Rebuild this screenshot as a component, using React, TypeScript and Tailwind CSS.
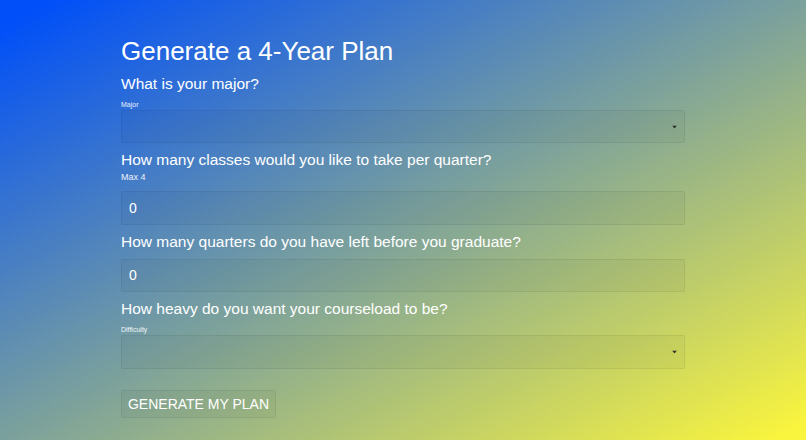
import React from 'react';

const font = { fontFamily: '"Liberation Sans", Arial, sans-serif' };

const Caret = () => (
  <svg width="5" height="3" viewBox="0 0 5 3" className="absolute right-[7px] top-1/2 -translate-y-1/2">
    <path d="M0 0h5L2.5 3z" fill="#2a2f2a" />
  </svg>
);

const SelectBox = ({ label, className }: { label: string; className?: string }) => (
  <>
    <div className="mt-[6px] text-[7px] leading-[9px] text-white/90">{label}</div>
    <div
      className={`relative mt-px rounded-[2px] border border-black/[0.06] bg-black/[0.03] ${className ?? ''}`}
    >
      <Caret />
    </div>
  </>
);

const NumberBox = ({ className }: { className?: string }) => (
  <div
    className={`flex items-center rounded-[2px] border border-black/[0.06] bg-black/[0.03] pl-[7px] text-[14px] text-white ${className ?? ''}`}
  >
    0
  </div>
);

const Question = ({ children }: { children: React.ReactNode }) => (
  <h3 className="mt-[7px] text-[15.5px] leading-5 font-normal text-white">{children}</h3>
);

export default function App() {
  return (
    <div
      className="min-h-[440px] w-full bg-linear-to-br/srgb from-[#004ff9] from-[3%] to-[#f9f43e] to-[98%]"
      style={font}
    >
      <div className="mx-auto flex w-[564px] flex-col pt-[35px]">
        <h1 className="text-[26px] leading-8 font-light text-white">Generate a 4-Year Plan</h1>

        <Question>What is your major?</Question>
        <SelectBox label="Major" className="h-[33px]" />

        <Question>How many classes would you like to take per quarter?</Question>
        <div className="mt-[1.5px] text-[9px] leading-[11px] text-white/90">Max 4</div>
        <NumberBox className="mt-[8.5px] h-[34px]" />

        <Question>How many quarters do you have left before you graduate?</Question>
        <NumberBox className="mt-[7px] h-[33px]" />

        <Question>How heavy do you want your courseload to be?</Question>
        <SelectBox label="Difficulty" className="h-[34px]" />

        <button className="mt-[21px] h-[28px] w-[155px] rounded-[2px] border border-black/[0.06] bg-black/[0.03] text-[14px] text-white">
          GENERATE MY PLAN
        </button>
      </div>
    </div>
  );
}
